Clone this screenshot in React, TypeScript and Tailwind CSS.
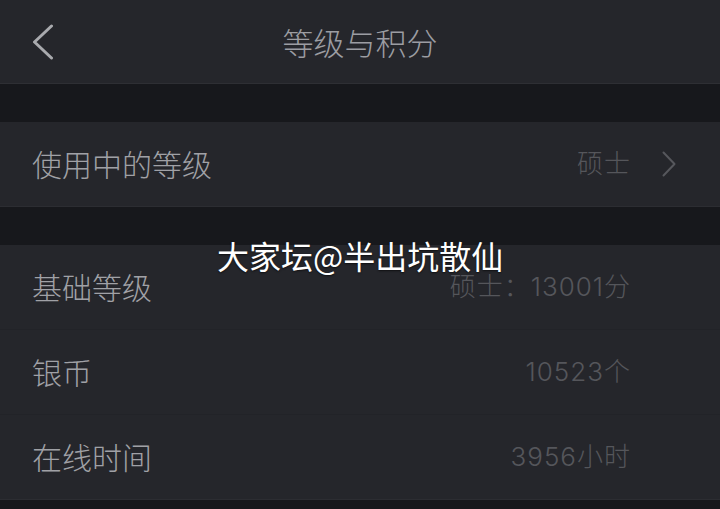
const font = {
  fontFamily: '"Noto Sans CJK SC", "Noto Sans", sans-serif',
};

const numFont = {
  fontFamily: 'Inter, "Noto Sans CJK SC", sans-serif',
};

function Row({
  label,
  value,
  arrow,
  last,
}: {
  label: string;
  value: string;
  arrow?: boolean;
  last?: boolean;
}) {
  return (
    <div
      className={
        "flex h-[85px] items-center bg-[#25262b] pl-[32px] " +
        (last ? "border-b border-[#2c2d32]" : "border-b border-[#222328]")
      }
    >
      <div className="flex-1 pb-[2px] text-[30px] font-light leading-none text-[#a0a1a6]">
        {label}
      </div>
      <div
        className="mr-[-1px] text-[26px] font-light leading-none tracking-[1px] text-[#55565b]"
        style={numFont}
      >
        {value}
      </div>
      <div className="flex w-[90px] pl-[32px]">
        {arrow && (
          <svg width="14" height="26" viewBox="0 0 14 26" fill="none">
            <path
              d="M1.5 1.5 L12.5 13 L1.5 24.5"
              stroke="#56575c"
              strokeWidth="2"
              strokeLinecap="round"
              strokeLinejoin="round"
            />
          </svg>
        )}
      </div>
    </div>
  );
}

export default function App() {
  return (
    <div
      className="relative h-[509px] w-[720px] overflow-hidden bg-[#17181c]"
      style={font}
    >
      <div className="flex h-[84px] items-center border-b border-[#2e2f34] bg-[#25262b] pl-[32px] pr-[22px]">
        <svg width="22" height="36" viewBox="0 0 22 36" fill="none">
          <path
            d="M19.5 2 L2.5 18 L19.5 34"
            stroke="#a9aaae"
            strokeWidth="3"
            strokeLinecap="round"
            strokeLinejoin="round"
          />
        </svg>
        <div className="flex-1 pr-[32px] text-center text-[31px] font-light leading-none text-[#9c9da2]">
          等级与积分
        </div>
      </div>

      <div className="mt-[38px]">
        <Row label="使用中的等级" value="硕士" arrow last />
      </div>

      <div className="mt-[38px]">
        <Row label="基础等级" value="硕士：13001分" />
        <Row label="银币" value="10523个" />
        <Row label="在线时间" value="3956小时" last />
      </div>

      <div className="pointer-events-none absolute left-[217px] top-[234px] text-[32px] leading-[42px] text-white [text-shadow:0_1px_2px_rgba(0,0,0,0.6)]">
        大家坛@半出坑散仙
      </div>
    </div>
  );
}
